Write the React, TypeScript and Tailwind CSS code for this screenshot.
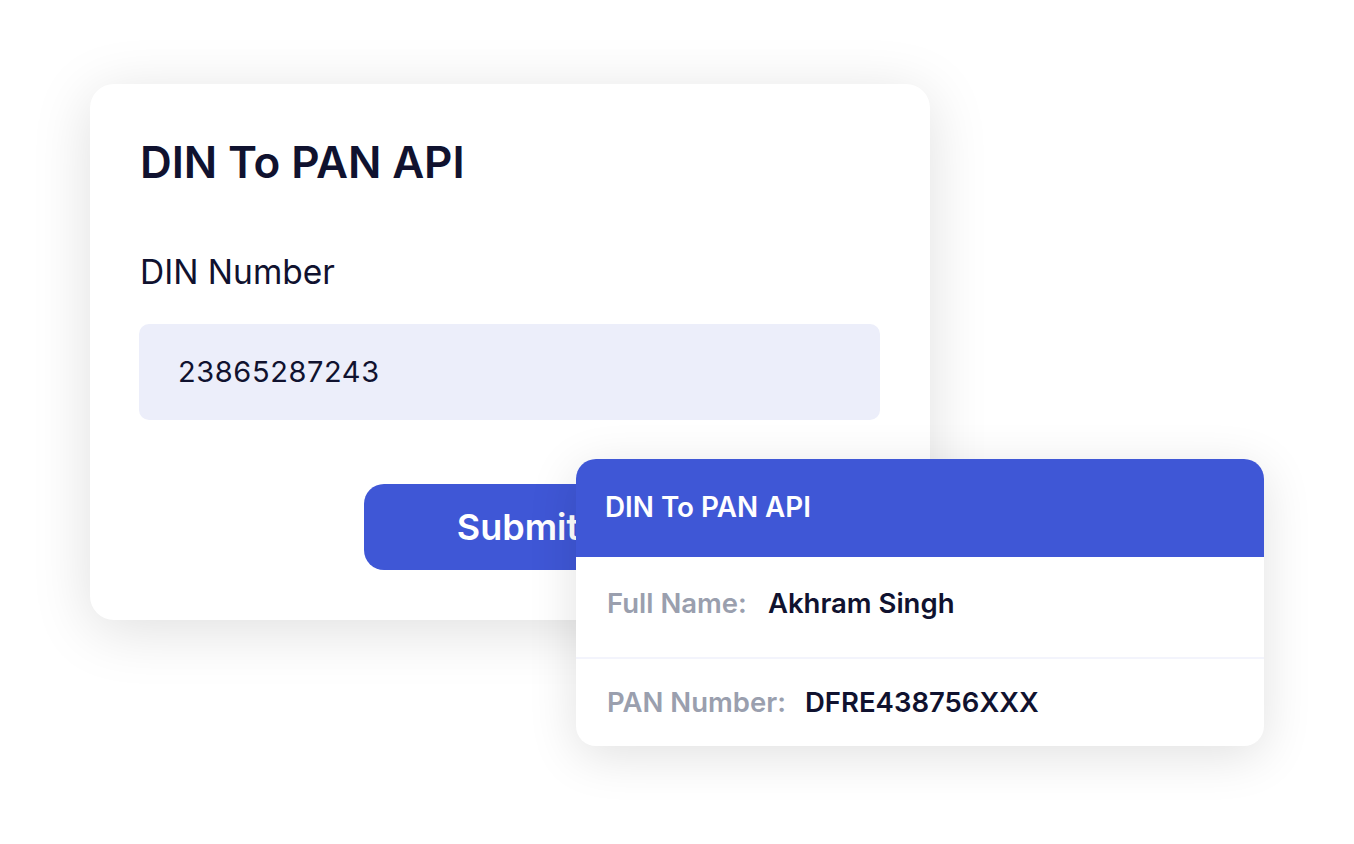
import React from "react";

export default function App() {
  return (
    <div
      className="relative w-[1354px] h-[844px] bg-white overflow-hidden"
      style={{ fontFamily: "Inter, 'Noto Sans', sans-serif" }}
    >
      <div className="pl-[90px] pt-[84px]">
        <div className="w-[840px] h-[536px] rounded-[24px] bg-white shadow-[0_10px_60px_rgba(0,0,0,0.13)] pl-[50px] pr-[50px] pt-[50px]">
          <h1 className="text-[44px] leading-[56px] font-semibold text-[#10122f] tracking-[-0.1px]">
            DIN To PAN API
          </h1>
          <div className="mt-[62px] text-[33.5px] leading-[40px] text-[#10122f]">DIN Number</div>
          <div className="mt-[32px] -ml-[1px] h-[96px] rounded-[10px] bg-[#eceefa] flex items-center pl-[39px] text-[29px] text-[#10122f] tracking-[0.6px]">
            23865287243
          </div>
          <div className="mt-[64px] pl-[224px]">
            <button className="w-[316px] h-[86px] rounded-[20px] bg-[#3f57d6] text-white text-[36px] font-semibold flex items-center justify-center pr-[8px]">
              Submit
            </button>
          </div>
        </div>
      </div>

      <div className="absolute left-[576px] top-[459px] w-[688px] rounded-[20px] bg-white shadow-[0_10px_50px_rgba(0,0,0,0.12)] overflow-hidden">
        <div className="h-[98px] bg-[#3f57d6] flex items-center pl-[29px] text-white text-[27.8px] font-semibold">
          DIN To PAN API
        </div>
        <div className="h-[102px] flex items-center pl-[31px] pb-[6px] text-[27.5px] font-semibold border-b-2 border-[#f3f4fc]">
          <span className="text-[#9a9fae]">Full Name:</span>
          <span className="ml-[21px] text-[#10122f]">Akhram Singh</span>
        </div>
        <div className="h-[87px] flex items-center pl-[31px] text-[27.5px] font-semibold">
          <span className="text-[#9a9fae]">PAN Number:</span>
          <span className="ml-[19px] text-[#10122f]">DFRE438756XXX</span>
        </div>
      </div>
    </div>
  );
}
